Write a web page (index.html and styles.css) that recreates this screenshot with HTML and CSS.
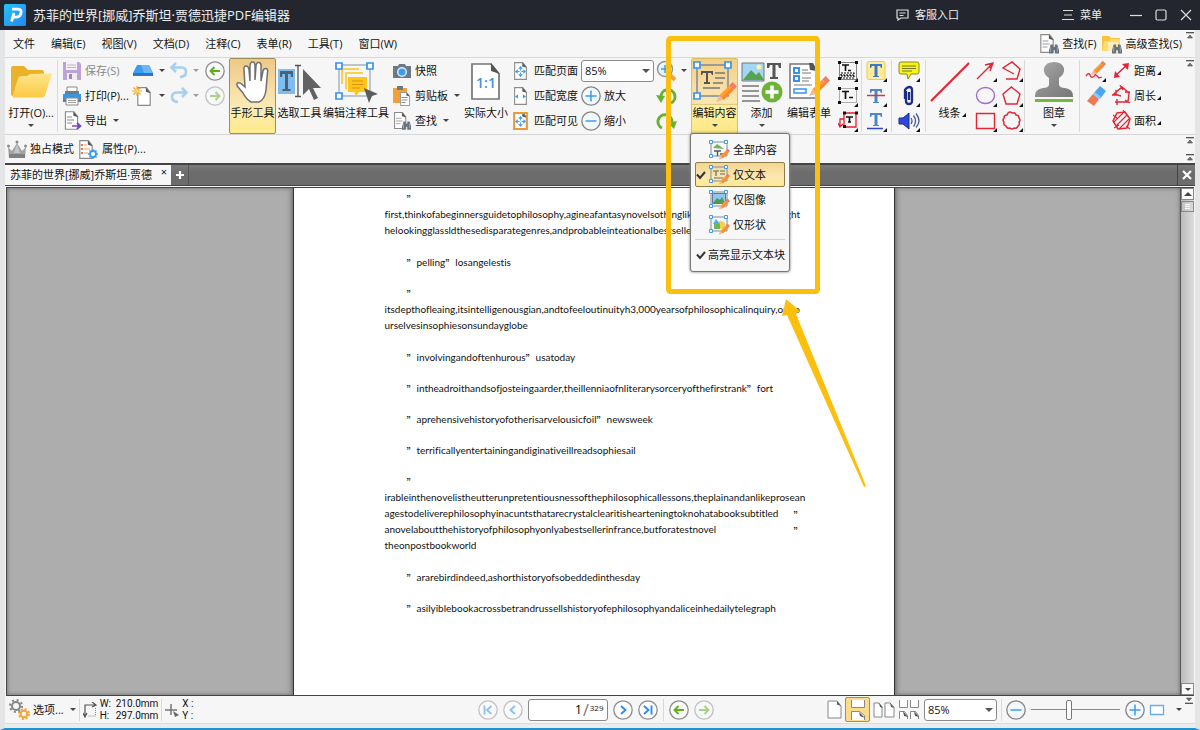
FILE: index.html
```html
<!DOCTYPE html>
<html lang="zh-CN">
<head>
<meta charset="utf-8">
<title>迅捷PDF编辑器</title>
<link rel="stylesheet" href="styles.css">
</head>
<body>
<svg class="defs" aria-hidden="true">
  <defs>
    <linearGradient id="gFolder" x1="0" y1="0" x2="0" y2="1"><stop offset="0" stop-color="#fee58a"/><stop offset="1" stop-color="#fcca42"/></linearGradient>
    <linearGradient id="gGrey" x1="0" y1="0" x2="1" y2="1"><stop offset="0" stop-color="#ababab"/><stop offset=".5" stop-color="#8d8d8d"/><stop offset="1" stop-color="#777"/></linearGradient>
    <linearGradient id="gLogo" x1="0" y1="0" x2="1" y2="1"><stop offset="0" stop-color="#27c2fb"/><stop offset="1" stop-color="#2189ef"/></linearGradient>
    <symbol id="pencil" viewBox="0 0 20 20"><path d="M1 19l3-6 4 4z" fill="#f6b795"/><path d="M4 13L13 4l4 4-9 9z" fill="#ff9f3a"/><path d="M6 15l9-9 2 2-9 9z" fill="#f98a2c"/><path d="M13 4l3-3 4 4-3 3z" fill="#f17d62"/></symbol>
    <symbol id="page" viewBox="0 0 16 20"><path d="M1.500.7h9l4 5v13.600h-13z" fill="#fff" stroke="#8a8a8a" stroke-width="1.200"/><path d="M10 .5l5 6-5-1.500z" fill="#555"/></symbol>
    <symbol id="binoc" viewBox="0 0 12 11"><path d="M2 0h3v3h2V0h3l2 7v4H7V7H5v4H0V7z" fill="#66727c"/><path d="M2 3v6M10 3v6" stroke="#a5afb7"/></symbol>
    <symbol id="frame" viewBox="0 0 22 22"><path d="M3 3h16v14H3z" fill="none" stroke="#7c8fa3" stroke-width="1"/><g fill="#fff" stroke="#3b9cf2"><path d="M1.500 1.500h3v3h-3zM16.500 1.500h3v3h-3zM1.500 15.500h3v3h-3z"/></g></symbol>
    <symbol id="prev" viewBox="0 0 20 20"><circle cx="10" cy="10" r="9.200" fill="#fafafa" stroke="#8e8e8e" stroke-width="1.300"/><path d="M15 10H6M9.500 6L5.500 10l4 4" fill="none" stroke="#5fae1d" stroke-width="1.900"/></symbol>
    <symbol id="next" viewBox="0 0 20 20"><circle cx="10" cy="10" r="9.200" fill="#fafafa" stroke="#8e8e8e" stroke-width="1.300"/><path d="M5 10h9M10.500 6l4 4-4 4" fill="none" stroke="#5fae1d" stroke-width="1.900"/></symbol>
    <symbol id="plus" viewBox="0 0 20 20"><circle cx="10" cy="10" r="9.200" fill="#f2f8fd" stroke="#858585" stroke-width="1.300"/><path d="M4.500 10h11M10 4.500v11" stroke="#3c9cf0" stroke-width="1.500"/></symbol>
    <symbol id="minus" viewBox="0 0 20 20"><circle cx="10" cy="10" r="9.200" fill="#f2f8fd" stroke="#858585" stroke-width="1.300"/><path d="M4.500 10h11" stroke="#3c9cf0" stroke-width="1.500"/></symbol>
    <symbol id="corner" viewBox="0 0 5 5"><path d="M5 1v4H1z" fill="#111"/></symbol>
    <symbol id="arrows4" viewBox="0 0 12 12"><path d="M6 0l2.500 3h-5zM6 12l2.500-3h-5zM0 6l3-2.500v5zM12 6L9 3.500v5z" fill="#3b97ec"/><path d="M6 3v2M6 7v2M3 6h2M7 6h2" stroke="#3b97ec"/></symbol>
    <symbol id="check" viewBox="0 0 10 10"><path d="M1 4.500l3 3.500 5-6" fill="none" stroke="#333" stroke-width="2"/></symbol>
    <symbol id="collapse" viewBox="0 0 8 7"><path d="M0 .7h8" stroke="#444" stroke-width="1.200"/><path d="M1.500 6L4 3l2.500 3z" fill="#777" stroke="#444" stroke-width=".6"/></symbol>
    <symbol id="find" viewBox="0 0 22 22"><use href="#page" x="1" y="1" width="16" height="19"/><path d="M4.500 8h6M4.500 11h7M4.500 14h5" stroke="#999"/><use href="#binoc" x="11" y="11" width="10" height="10"/></symbol>
  </defs>
</svg>

<div class="app">
  <header class="titlebar">
    <svg width="22" height="22" viewBox="0 0 22 22"><rect width="22" height="22" rx="1.500" fill="url(#gLogo)"/><path d="M7.500 17.500L10 9M8 5.200h5.500q4.500 0 3.500 4t-5 4H9.500" fill="none" stroke="#fff" stroke-width="2.800"/></svg>
    <h1 class="title">苏菲的世界[挪威]乔斯坦·贾德迅捷PDF编辑器</h1>
    <button class="tb-btn service"><svg width="13" height="12" viewBox="0 0 13 12"><path d="M1 1h11v8H5l-3 2V9H1zM3.500 4h6M3.500 6.500h4" fill="none" stroke="#ddd" stroke-width="1.200"/></svg>客服入口</button>
    <button class="tb-btn menu-btn"><svg width="12" height="12" viewBox="0 0 12 12"><path d="M1 1.500h10M2 6h8M0 10.500h12" stroke="#ddd" stroke-width="1.200"/></svg>菜单</button>
    <div class="win">
      <button aria-label="最小化"><svg width="12" height="12"><path d="M0 6.500h12" stroke="#ddd" stroke-width="1.200"/></svg></button>
      <button aria-label="最大化"><svg width="12" height="12"><rect x="1" y="1" width="10" height="10" rx="1.500" fill="none" stroke="#ddd" stroke-width="1.200"/></svg></button>
      <button aria-label="关闭"><svg width="12" height="12"><path d="M1 1l10 10M11 1L1 11" stroke="#ddd" stroke-width="1.200"/></svg></button>
    </div>
  </header>

  <div class="shell">
    <nav class="menubar">
      <button>文件</button><button>编辑(E)</button><button>视图(V)</button><button>文档(D)</button><button>注释(C)</button><button>表单(R)</button><button>工具(T)</button><button>窗口(W)</button>
      <div class="menubar-right">
        <button><svg width="22" height="22"><use href="#find"/></svg>查找(F)</button>
        <button><svg width="22" height="22"><path d="M1 3h7l2 2h9v13H1z" fill="#f8c33a"/><path d="M3 8h5l2-2h9v12H1z" fill="#fddc74"/><path d="M7 9h10v9H7z" fill="#fff" opacity=".5"/><use href="#binoc" x="11" y="11" width="10" height="10"/></svg>高级查找(S)</button>
      </div>
      <svg class="collapse" width="8" height="7"><use href="#collapse"/></svg>
    </nav>

    <div class="ribbon">
      <button class="big open">
        <span class="pic"><svg width="42" height="34" viewBox="0 0 42 34"><path d="M1 3q0-2 2-2h11l4 4h14q2 0 2 2v24H3q-2 0-2-2z" fill="#e9b22a"/><path d="M13 11h4l3-2 22-.500-7 22q-.500 2-3 2H4q-2 0-1.500-2l6-18q1-2 4.500-1.500z" fill="url(#gFolder)"/></svg></span>
        <span class="lbl">打开(O)...</span><i class="dd"></i>
      </button>
      <i class="vsep"></i>

      <div class="col col-file">
        <button class="dim"><svg width="20" height="20"><path d="M1 1h16l2 2v16H1z" fill="#bda2d6"/><path d="M4 1h11v8H4z" fill="#f5f0fa"/><path d="M5 4h9M5 6.500h9" stroke="#bbb"/><path d="M5 12h10v7H5z" fill="#eee"/><path d="M7 13h3v5H7z" fill="#a185bf"/></svg>保存(S)</button>
        <button><svg width="20" height="20"><path d="M5 1h10v7H5z" fill="#fff" stroke="#888"/><path d="M3 5h14v5H3z" fill="#6f7b86"/><path d="M1 8h18v7H1z" fill="#3f94e0"/><path d="M1 13h18v3H1z" fill="#6f7b86"/><path d="M4 12h12v7H4z" fill="#fff" stroke="#888"/><path d="M6 14.500h8M6 16.500h8" stroke="#999"/></svg>打印(P)...</button>
        <button><svg width="20" height="20"><use href="#page" x="2" y="0" width="15" height="19"/><path d="M5 6h5M5 9h7M5 12h5" stroke="#888"/><path d="M10 15h8M15 12l3.500 3-3.500 3" fill="none" stroke="#7847b8" stroke-width="1.700"/></svg>导出<i class="dd"></i></button>
      </div>
      <div class="col col-new">
        <button aria-label="扫描"><svg width="22" height="20"><path d="M5 4h12l4 8H1z" fill="#3d9cf0"/><path d="M9 4h8l4 8H12z" fill="#6cb6f7"/><path d="M1 12h20v3H1z" fill="#2a79c9"/></svg><i class="dd"></i></button>
        <button aria-label="新建"><svg width="22" height="20"><use href="#page" x="4" y="1" width="16" height="19"/><path d="M5 0v10M0 5h10M1.500 1.500l7 7M8.500 1.500l-7 7" stroke="#f6a623" stroke-width="1.200"/><circle cx="5" cy="5" r="2" fill="#ffd36b"/></svg><i class="dd"></i></button>
      </div>
      <div class="col col-undo">
        <button class="soft" aria-label="撤销"><svg width="20" height="20"><path d="M3 6.500h9q5 0 5 4.500t-6 5M7 2L2.500 6.500 7 11" fill="none" stroke="#58a9ef" stroke-width="2.600"/></svg><i class="dd"></i></button>
        <button class="soft" aria-label="重做"><svg width="20" height="20"><path d="M17 6.500H8q-5 0-5 4.500t6 5M13 2l4.500 4.500L13 11" fill="none" stroke="#58a9ef" stroke-width="2.600"/></svg><i class="dd"></i></button>
      </div>
      <div class="col col-nav">
        <button aria-label="后退"><svg width="20" height="20"><use href="#prev"/></svg></button>
        <button class="soft" aria-label="前进"><svg width="20" height="20"><use href="#next"/></svg></button>
      </div>

      <button class="big tool active">
        <span class="pic"><svg width="36" height="44" viewBox="0 0 36 44"><path d="M10 27L9 10q-.500-4 2-4t3 4l1 11V6q0-4 2.500-4T20 6v14l1-14q.500-4 3-3.500T26 6.500V21l2-10q.800-3 3-2.500t1.500 3.500L31 30q-1 9-7 12h-8q-5-3-8-9l-5-6q-2-3-.500-4 2-1 4 1z" fill="#fff" stroke="#707070" stroke-width="1.500"/></svg></span>
        <span class="lbl">手形工具</span>
      </button>
      <button class="big tool">
        <span class="pic"><svg width="43" height="42" viewBox="0 0 43 42"><rect y="8" width="17" height="25" fill="#7dbdf2"/><path d="M2 10h13v6h-2l-.500-3H10v15h2.500v2h-8v-2H7V13H4.500L4 16H2z" fill="#4c6173"/><path d="M17 4.500h6M17 35.500h6M20 5v30" stroke="#555" stroke-width="1.300"/><path d="M25 8v26l6-6 5 11 4-2-5-10h8z" fill="#626262"/></svg></span>
        <span class="lbl">选取工具</span>
      </button>
      <button class="big anno">
        <span class="pic"><svg width="43" height="44" viewBox="0 0 43 44"><path d="M4 5h31v31H4z" fill="none" stroke="#7f93a9"/><path d="M6 8h18v2H8v14H6zM10 12h18v2H12v15h-2z" fill="#fad04c"/><path d="M13 17h19v15h-8l-3 4-2-4h-6z" fill="#fbc51d"/><path d="M17 21h11M17 24.500h11M17 28h8" stroke="#dd9308"/><g fill="#fff" stroke="#3792ef" stroke-width="1.700"><path d="M1 3h6v6H1zM32 3h6v6h-6zM1 33h6v6H1z"/></g><path d="M29 28l14 6-6 2-3 7z" fill="#5c5c5c"/></svg></span>
        <span class="lbl">编辑注释工具</span>
      </button>

      <div class="col col-clip">
        <button><svg width="20" height="20"><path d="M1 5h5l1-2h6l1 2h5v12H1z" fill="#6d7983"/><circle cx="10" cy="11" r="5" fill="#d7ecff"/><circle cx="10" cy="11" r="3.500" fill="#3d9cf0"/></svg>快照</button>
        <button><svg width="20" height="20"><path d="M1 2h14v15H1z" fill="#f3a13a"/><path d="M5 0h6v4H5z" fill="#6d7983"/><use href="#page" x="7" y="6" width="12" height="14"/><path d="M9.500 11.500h6M9.500 14h6M9.500 16.500h4" stroke="#888"/></svg>剪贴板<i class="dd"></i></button>
        <button><svg width="20" height="20" viewBox="0 0 22 22"><use href="#find"/></svg>查找<i class="dd"></i></button>
      </div>
      <button class="big actual">
        <span class="pic"><svg width="32" height="40" viewBox="0 0 32 40"><path d="M2 2h19l8 10v25H2z" fill="#fff" stroke="#767676" stroke-width="1.700"/><path d="M21 1l9 11-9-3z" fill="#555"/><text x="16" y="26" text-anchor="middle" class="ratio">1:1</text></svg></span>
        <span class="lbl">实际大小</span>
      </button>
      <div class="col col-fit">
        <button><svg width="18" height="20"><use href="#page" x="1" y="1" width="15" height="18"/><use href="#arrows4" x="3" y="5" width="11" height="11"/></svg>匹配页面</button>
        <button><svg width="18" height="20"><use href="#page" x="1" y="1" width="15" height="18"/><path d="M3 10.500l3-2v4zM14 10.500l-3-2v4z" fill="#3b97ec"/></svg>匹配宽度</button>
        <button><svg width="18" height="20"><use href="#page" x="1" y="1" width="15" height="18"/><path d="M2 2h13v16H2z" fill="none" stroke="#ee9a34" stroke-width="1.800"/><use href="#arrows4" x="3" y="5" width="11" height="11"/></svg>匹配可见</button>
      </div>
      <div class="col col-zoom">
        <span class="sel"><select aria-label="缩放比例"><option>85%</option></select></span>
        <button><svg width="20" height="20"><use href="#plus"/></svg>放大</button>
        <button><svg width="20" height="20"><use href="#minus"/></svg>缩小</button>
      </div>
      <div class="col col-rotate">
        <button aria-label="缩放工具"><svg width="22" height="22"><path d="M13 14l6 6" stroke="#f4a045" stroke-width="4"/><circle cx="9" cy="9" r="7.500" fill="#e8f4fd" stroke="#8b98a3" stroke-width="1.500"/><path d="M5 9h8M9 5v8" stroke="#3c9cf0" stroke-width="1.500"/></svg><i class="dd"></i></button>
        <button aria-label="逆时针旋转"><svg width="22" height="20"><path d="M5 11a7 7 0 1 1 10 6" fill="none" stroke="#67b233" stroke-width="3"/><path d="M0 9l9 1-4 7z" fill="#67b233"/></svg></button>
        <button aria-label="顺时针旋转"><svg width="22" height="20"><path d="M16 11a7 7 0 1 0-10 6" fill="none" stroke="#67b233" stroke-width="3"/><path d="M21 10l-9 2 6 6z" fill="#67b233"/></svg></button>
      </div>

      <div class="drop">
        <button class="big tool split" aria-expanded="true">
          <span class="pic"><svg width="44" height="43" viewBox="0 0 44 43"><path d="M4 4h31v31H4z" fill="none" stroke="#7d8997" stroke-width="1.500"/><path d="M8 10h12v4h-1l-1-2h-3v9h2v2h-6v-2h2v-9h-3l-1 2H8z" fill="#555"/><path d="M22 12h10M22 17h10M20 22h10M10 27h17" stroke="#777" stroke-width="1.300"/><g fill="#fff" stroke="#3792ef" stroke-width="1.700"><path d="M1 1h6v6H1zM32 1h6v6h-6zM1 32h6v6H1z"/></g><use href="#pencil" x="22" y="20" width="22" height="22"/></svg></span>
          <span class="lbl">编辑内容</span><i class="dd"></i>
        </button>
        <div class="menu" role="menu">
          <button role="menuitem"><span class="ck"></span><svg width="22" height="22"><use href="#frame"/><path d="M5 9l4-4 3 2 4 3z" fill="#72b45d"/><path d="M6 12h7M9.500 12v5M12 15h5" stroke="#555" stroke-width="1.400"/><use href="#pencil" x="10" y="9" width="12" height="12"/></svg>全部内容</button>
          <button role="menuitem" class="on"><svg class="ck" width="10" height="10"><use href="#check"/></svg><svg width="22" height="22"><use href="#frame"/><path d="M5 7h6M8 7v5M12 7h5M12 10h5M6 14h9" stroke="#666" stroke-width="1.200"/><use href="#pencil" x="10" y="9" width="12" height="12"/></svg>仅文本</button>
          <button role="menuitem"><span class="ck"></span><svg width="22" height="22"><use href="#frame"/><path d="M4.500 4.500h13v10h-13z" fill="#8fc8ee" stroke="#66798a"/><path d="M5 14l4-5 3 2 2-3 3 6z" fill="#4f9a54"/><use href="#pencil" x="10" y="9" width="12" height="12"/></svg>仅图像</button>
          <button role="menuitem"><span class="ck"></span><svg width="22" height="22"><use href="#frame"/><circle cx="13" cy="11" r="4" fill="#f6cf4a"/><path d="M8 5l4 5H5z" fill="#58a9ef"/><path d="M6 10h6v5H6z" fill="#6db65a"/><use href="#pencil" x="10" y="9" width="12" height="12"/></svg>仅形状</button>
          <hr>
          <button role="menuitem"><svg class="ck" width="10" height="10"><use href="#check"/></svg>高亮显示文本块</button>
        </div>
      </div>
      <button class="big tool">
        <span class="pic"><svg width="42" height="43" viewBox="0 0 42 43"><path d="M1 2h22v18H1z" fill="#a3d5f4" stroke="#777"/><path d="M2 19l8-10 5 5 3-3 5 8z" fill="#58a352"/><circle cx="18" cy="6" r="2.500" fill="#fff2a2"/><path d="M26 2h14v5h-2l-1-3h-2.500v12H37v2h-8v-2h2.500V4H29l-1 3h-2z" fill="#555"/><path d="M1 25h17M1 30h17M1 35h17M1 40h18" stroke="#777" stroke-width="1.500"/><circle cx="31" cy="31" r="10.500" fill="#6cb338"/><path d="M24.500 31h13M31 24.500v13" stroke="#fff" stroke-width="3.500"/></svg></span>
        <span class="lbl">添加</span><i class="dd"></i>
      </button>
      <button class="big form">
        <span class="pic"><svg width="44" height="43" viewBox="0 0 44 43"><path d="M3 3h22l5 6v28H3z" fill="#fff" stroke="#767676" stroke-width="1.500"/><path d="M22 2h4l4 8-7-1z" fill="#555"/><path d="M7 7h5v5H7zM7 15h5v5H7z" fill="none" stroke="#3792ef" stroke-width="2"/><path d="M15 9h6M15 12h9M15 17h9M15 20h7M7 24h18" stroke="#777"/><path d="M7 28h12v4H7z" fill="none" stroke="#3792ef" stroke-width="1.500"/><use href="#pencil" x="21" y="14" width="22" height="22"/></svg></span>
        <span class="lbl">编辑表单</span>
      </button>

      <div class="col col-icon text-tools">
        <button aria-label="文本块"><svg width="20" height="22"><path d="M1.500 2.500h17v17h-17z" fill="none" stroke="#111" stroke-dasharray="1 1"/><path d="M4 5h7M7.500 5v6M10 10.500h3" stroke="#111" stroke-width="1.700"/><path d="M3 13h13v2H3zM3 16h13v2H3z" fill="none" stroke="#111" stroke-width="1.200" stroke-dasharray="2 1"/><path d="M0 1h3v3H0zM17 1h3v3h-3zM0 17h3v3H0z" fill="#111"/><use href="#corner" x="15" y="17" width="5" height="5"/></svg></button>
        <button aria-label="文本框"><svg width="20" height="22"><path d="M1.500 3.500h17v14h-17z" fill="none" stroke="#666" stroke-dasharray="1 1"/><path d="M4 6.500h7M7.500 6v8M11 12.500h4" stroke="#111" stroke-width="1.700"/><path d="M0 2h3v3H0zM17 2h3v3h-3zM0 16h3v3H0z" fill="#111"/><use href="#corner" x="15" y="17" width="5" height="5"/></svg></button>
        <button aria-label="标注框"><svg width="20" height="22"><path d="M6 3h12v14H6z" fill="none" stroke="#e0202c" stroke-width="1.300"/><path d="M6 9H2v7M0 13l2 4 3-3" fill="none" stroke="#e0202c" stroke-width="1.300"/><path d="M8 7h7M11.500 7v5M10 12h3" stroke="#111" stroke-width="1.600"/><path d="M5 1.500h3v3H5zM17 1.500h3v3h-3zM5 15h3v3H5z" fill="#111"/><use href="#corner" x="15" y="17" width="5" height="5"/></svg></button>
      </div>
      <i class="vsep"></i>
      <div class="col col-icon marks">
        <button aria-label="高亮"><svg width="22" height="22"><rect x="1" y="1.500" width="18" height="18" rx="2" fill="#ffeb9c" stroke="#e4cf4a"/><path d="M4 4h12v4h-1l-1-2h-2.500v10H13v1H7v-1h1.500V6H6L5 8H4z" fill="#3c78c3"/><use href="#corner" x="16" y="17" width="5" height="5"/></svg></button>
        <button aria-label="删除线"><svg width="22" height="22"><path d="M4 4h12v4h-1l-1-2h-2.500v11H13v1H7v-1h1.500V6H6L5 8H4z" fill="#4c85cb"/><path d="M1 10.500h18" stroke="#e2303a" stroke-width="1.500"/><use href="#corner" x="16" y="17" width="5" height="5"/></svg></button>
        <button aria-label="下划线"><svg width="22" height="22"><path d="M4 3h12v4h-1l-1-2h-2.500v10H13v1H7v-1h1.500V5H6L5 7H4z" fill="#4c85cb"/><path d="M1 18.500h16" stroke="#2b45d4" stroke-width="1.500"/><use href="#corner" x="16" y="17" width="5" height="5"/></svg></button>
      </div>
      <i class="vsep"></i>
      <div class="col col-icon notes">
        <button aria-label="便签"><svg width="22" height="22"><path d="M3 2h16q2 0 2 2v8q0 2-2 2h-6l-3 5-1-5H3q-2 0-2-2V4q0-2 2-2z" fill="#f7f31c" stroke="#8d8a22"/><path d="M4 6h14M4 8.500h14M4 11h10" stroke="#777a22"/><use href="#corner" x="17" y="17" width="5" height="5"/></svg></button>
        <button aria-label="附件"><svg width="22" height="22"><path d="M8 6v10q0 3 3 3t3-3V5q0-3-2.500-3T7 5v9M11 7v8" fill="none" stroke="#1d2c86" stroke-width="2.300"/><use href="#corner" x="17" y="17" width="5" height="5"/></svg></button>
        <button aria-label="声音"><svg width="22" height="22"><path d="M1 8h4l6-5v16l-6-5H1z" fill="#2d46dc" stroke="#1c2c8c"/><path d="M13 8q2 3 0 6M15.500 5.500q4 5.500 0 11M18 3.500q6 7.500 0 14" fill="none" stroke="#4a5a8c" stroke-width="1.300"/><use href="#corner" x="17" y="17" width="5" height="5"/></svg></button>
      </div>
      <i class="vsep"></i>
      <button class="big line">
        <span class="pic"><svg width="42" height="42"><path d="M2 40L40 2" stroke="#e32636" stroke-width="2.200"/></svg></span>
        <span class="lbl mark">线条</span>
      </button>
      <div class="col col-icon">
        <button aria-label="箭头"><svg width="22" height="22"><path d="M2 19L17 4M10 5l8-2-3 8M15 4v4" fill="none" stroke="#e32636" stroke-width="1.400"/><use href="#corner" x="17" y="17" width="5" height="5"/></svg></button>
        <button aria-label="椭圆"><svg width="22" height="22"><ellipse cx="10.500" cy="10.500" rx="9" ry="8" fill="none" stroke="#9b72c8" stroke-width="1.400"/><use href="#corner" x="17" y="17" width="5" height="5"/></svg></button>
        <button aria-label="矩形"><svg width="22" height="22"><path d="M1.500 3.500h18v15h-18z" fill="none" stroke="#e32636" stroke-width="1.400"/><use href="#corner" x="17" y="17" width="5" height="5"/></svg></button>
      </div>
      <div class="col col-icon">
        <button aria-label="折线"><svg width="22" height="22"><path d="M13 14L2 8l9-6 8 7-3 10H5" fill="none" stroke="#e32636" stroke-width="1.400"/><use href="#corner" x="17" y="17" width="5" height="5"/></svg></button>
        <button aria-label="多边形"><svg width="22" height="22"><path d="M10.500 2L19 9l-3 10H5L2 9z" fill="none" stroke="#e32636" stroke-width="1.400"/><use href="#corner" x="17" y="17" width="5" height="5"/></svg></button>
        <button aria-label="云朵"><svg width="22" height="22"><path d="M7 3q2-2 4 0 3-1 4 2 3 0 3 3 2 2 0 4 1 3-1 4-1 3-4 2-2 2-4 0-3 1-4-2-3-1-2-4-2-2 0-4 0-3 3-3z" fill="none" stroke="#e32636" stroke-width="1.500"/><use href="#corner" x="17" y="17" width="5" height="5"/></svg></button>
      </div>
      <i class="vsep"></i>
      <button class="big stamp">
        <span class="pic"><svg width="40" height="42" viewBox="0 0 40 42"><path d="M15 17q-6-4-5-10Q12 1 20 1t10 6q1 6-5 10v7q1 3 6 3 8 1 8 8v1H1v-1q0-7 8-8 5 0 6-3z" fill="url(#gGrey)"/><path d="M1 38h38v3H1z" fill="#76b83c"/></svg></span>
        <span class="lbl">图章</span><i class="dd"></i>
      </button>
      <i class="vsep"></i>
      <div class="col col-draw">
        <button aria-label="铅笔"><svg width="22" height="22"><use href="#pencil" x="5" y="0" width="16" height="16"/><path d="M1 16q3-4 4-1t3 2 2-2 2 1 2 2 3-1" fill="none" stroke="#e32636" stroke-width="1.300"/><use href="#corner" x="16" y="17" width="5" height="5"/></svg></button>
        <button aria-label="橡皮"><svg width="22" height="22"><path d="M9 8l6-7 6 5-6 8z" fill="#4ca3ee"/><path d="M8 9l6 5-5 7-7-5z" fill="#ee7a55"/><path d="M8 9l2-2 6 5-2 2z" fill="#8ec7f6"/></svg></button>
      </div>
      <div class="col col-measure">
        <button><svg width="21" height="22"><path d="M4 16L16 5" stroke="#e32636" stroke-width="1.500"/><path d="M11 4l7-1-1 7zM3 18l1-7 5 6z" fill="#e32636"/></svg><span class="mark">距离</span></button>
        <button><svg width="21" height="22"><path d="M10 11L3 9l8-7 7 6-1 9H4M5 5v5H1M9 0l3 5M14 7h5M6 14v6M14 15l5 3" fill="none" stroke="#e32636" stroke-width="1.400"/></svg><span class="mark">周长</span></button>
        <button><svg width="21" height="22"><path d="M6 3l8-1 5 7-3 9-9 1-5-8z" fill="none" stroke="#e32636" stroke-width="1.500"/><path d="M3 12L12 3M5 16L16 5M8 19L18 9M2 5l4 3M15 16l4 3M12 0l3 4M3 18l5-3" fill="none" stroke="#e32636" stroke-width="1.100"/></svg><span class="mark">面积</span></button>
      </div>
      <svg class="collapse" width="8" height="7"><use href="#collapse"/></svg>
    </div>

    <div class="props">
      <button><svg width="20" height="20"><path d="M1 8l4 4 5-8 5 8 4-4-1 11H2z" fill="#a3a3a3"/><path d="M2 15h16v4H2z" fill="#808080"/><path d="M7 14l3-9 3 9" fill="#c6c6c6"/><g fill="#8a8a8a"><circle cx="1.500" cy="7" r="1.500"/><circle cx="18.500" cy="7" r="1.500"/><circle cx="10" cy="3" r="1.500"/></g></svg>独占模式</button>
      <button><svg width="21" height="21"><use href="#page" x="0" y="1" width="16" height="19"/><path d="M3 6h2M3 10h2M3 14h2" stroke="#ee7a3c" stroke-width="2"/><path d="M6 6h3M6 10h6M6 14h4" stroke="#ee9b6a"/><circle cx="15" cy="15" r="3" fill="#fff" stroke="#3d9cf0" stroke-width="1.800"/><path d="M15 10v2M15 18v2M10 15h2M18 15h2M11.500 11.500l1.500 1.500M17 17l1.500 1.500M18.500 11.500L17 13M13 17l-1.500 1.500" stroke="#3d9cf0" stroke-width="1.400"/></svg>属性(P)...</button>
      <div class="collapse-pair"><svg width="8" height="7"><use href="#collapse"/></svg><svg width="8" height="7"><use href="#collapse"/></svg></div>
    </div>

    <div class="tabs">
      <div class="tab"><span>苏菲的世界[挪威]乔斯坦·贾德</span><button aria-label="关闭标签">×</button></div>
      <button class="newtab" aria-label="新建标签"><svg width="10" height="10"><path d="M1 5h8M5 1v8" stroke="#fff" stroke-width="2.200"/></svg></button>
      <button class="closeall" aria-label="关闭全部"><svg width="10" height="10"><path d="M1 1l8 8M9 1L1 9" stroke="#fff" stroke-width="2.200"/></svg></button>
    </div>

    <main class="view">
      <div class="canvas">
        <article class="page">
          <p class="lead"><q>”</q></p>
          <p>first,thinkofabeginnersguidetophilosophy,agineafantasynovelsothinglikeabriefhistorytothrought<br>helookingglassldthesedisparategenres,andprobableinteationalbestseller</p>
          <p class="in"><q>”</q>pelling<q>”</q>losangelestis</p>
          <p class="in"><q>”</q></p>
          <p>itsdepthofleaing,itsintelligenousgian,andtofeeloutinuityh3,000yearsofphilosophicalinquiry,opeo<br>urselvesinsophiesonsundayglobe</p>
          <p class="in"><q>”</q>involvingandoftenhurous<q>”</q>usatoday</p>
          <p class="in"><q>”</q>intheadroithandsofjosteingaarder,theillenniaofnliterarysorceryofthefirstrank<q>”</q>fort</p>
          <p class="in"><q>”</q>aprehensivehistoryofotherisarvelousicfoil<q>”</q>newsweek</p>
          <p class="in"><q>”</q>terrificallyentertainingandiginativeillreadsophiesail</p>
          <p class="in"><q>”</q></p>
          <p>irableinthenovelistheutterunpretentiousnessofthephilosophicallessons,theplainandanlikeprosean</p>
          <p class="spread"><span>agestodeliverephilosophyinacuntsthatarecrystalclearitishearteningtoknohatabooksubtitled</span><q>”</q></p>
          <p class="spread"><span>anovelaboutthehistoryofphilosophyonlyabestsellerinfrance,butforatestnovel</span><q>”</q></p>
          <p>theonpostbookworld</p>
          <p class="in"><q>”</q>ararebirdindeed,ashorthistoryofsobeddedinthesday</p>
          <p class="in"><q>”</q>asilyiblebookacrossbetrandrussellshistoryofephilosophyandaliceinhedailytelegraph</p>
        </article>
      </div>
      <div class="scroll">
        <button aria-label="向上"><i class="dd up"></i></button>
        <span class="thumb"></span>
        <button class="down" aria-label="向下"><i class="dd"></i></button>
      </div>
    </main>

    <footer class="status">
      <div class="st-left">
        <button class="opts"><svg width="21" height="21"><g fill="none"><circle cx="7" cy="7" r="4" stroke="#858585" stroke-width="2"/><circle cx="7" cy="7" r="6" stroke="#858585" stroke-width="2" stroke-dasharray="2 2.700"/><circle cx="15" cy="15" r="3.300" stroke="#f2a637" stroke-width="2"/><circle cx="15" cy="15" r="5" stroke="#f2a637" stroke-width="2" stroke-dasharray="2 1.930"/></g></svg>选项...<i class="dd"></i></button>
        <i class="vsep"></i>
        <svg width="14" height="16"><path d="M2 14V3h10M9 0l4 3-4 2M0 11l2 4 2-4" fill="none" stroke="#555" stroke-width="1.200"/><path d="M12.500 6v8H5" fill="none" stroke="#888" stroke-dasharray="1 1"/></svg>
        <dl class="dims"><dt>W:</dt><dd>210.0mm</dd><dt>H:</dt><dd>297.0mm</dd></dl>
        <i class="vsep"></i>
        <svg width="14" height="16"><path d="M0 8h12M6 2v11" stroke="#777" stroke-width="1.500"/><path d="M8 9l6 4-4 2z" fill="#666"/></svg>
        <div class="xy"><span>X :</span><span>Y :</span></div>
      </div>
      <div class="st-mid">
        <button class="soft" aria-label="首页"><svg width="20" height="20"><circle cx="10" cy="10" r="9.200" fill="#fff" stroke="#8e8e8e" stroke-width="1.300"/><path d="M6.500 5.500v9M13.500 6L9 10l4.500 4" fill="none" stroke="#2b8df0" stroke-width="1.900"/></svg></button>
        <button class="soft" aria-label="上一页"><svg width="20" height="20"><circle cx="10" cy="10" r="9.200" fill="#fff" stroke="#8e8e8e" stroke-width="1.300"/><path d="M12 6l-4.500 4 4.500 4" fill="none" stroke="#2b8df0" stroke-width="1.900"/></svg></button>
        <label class="pageno"><input aria-label="页码" value="1"><b>/</b><small>329</small></label>
        <button aria-label="下一页"><svg width="20" height="20"><circle cx="10" cy="10" r="9.200" fill="#fff" stroke="#8e8e8e" stroke-width="1.300"/><path d="M8 6l4.500 4L8 14" fill="none" stroke="#2b8df0" stroke-width="1.900"/></svg></button>
        <button aria-label="末页"><svg width="20" height="20"><circle cx="10" cy="10" r="9.200" fill="#fff" stroke="#8e8e8e" stroke-width="1.300"/><path d="M6 6l4.500 4L6 14M13.500 5.500v9" fill="none" stroke="#2b8df0" stroke-width="1.900"/></svg></button>
        <i class="vsep"></i>
        <button aria-label="后退视图"><svg width="20" height="20"><use href="#prev"/></svg></button>
        <button class="soft" aria-label="前进视图"><svg width="20" height="20"><use href="#next"/></svg></button>
      </div>
      <div class="st-right">
        <div class="modes">
          <button aria-label="单页"><svg width="15" height="19"><path d="M1 1h9l4 5v12H1z" fill="#fff" stroke="#888"/><path d="M10 1l4 5-4-1.500z" fill="#555"/></svg></button>
          <button class="sel-mode" aria-label="连续"><svg width="16" height="20"><path d="M1.500 0v7.500h13V0M1.500 20v-8.500h8l5 4v4.500" fill="#fff" stroke="#888"/><path d="M9 12l6 6-5-2z" fill="#555"/></svg></button>
          <button aria-label="双页"><svg width="22" height="16"><path d="M1 1h5l3 4v10H1zM12 1h5l4 4v10h-9z" fill="#fff" stroke="#888"/><path d="M6 1l4 5-3-1zM17 1l4 5-3-1z" fill="#555"/></svg></button>
          <button aria-label="双页连续"><svg width="22" height="20"><path d="M1.500 0v7.500h8V0M12.500 0v7.500h8V0M1.500 19v-7.500h5l3 4v3.500M12.500 19v-7.500h5l3 4v3.500" fill="#fff" stroke="#888"/><path d="M5 11l5 6-4-1zM16 11l5 6-4-1z" fill="#555"/></svg></button>
        </div>
        <span class="sel"><select aria-label="缩放"><option>85%</option></select></span>
        <i class="vsep"></i>
        <button aria-label="缩小视图"><svg width="20" height="20"><use href="#minus"/></svg></button>
        <input class="slider" type="range" min="0" max="100" value="42" aria-label="缩放滑块">
        <button aria-label="放大视图"><svg width="20" height="20"><use href="#plus"/></svg></button>
        <button class="full" aria-label="全屏"><svg width="16" height="12"><path d="M1.500 1.500h13v9h-13z" fill="#fff" stroke="#6aaee8" stroke-width="1.300"/></svg><i class="dd"></i></button>
      </div>
      <svg class="collapse" width="8" height="7"><use href="#collapse"/></svg>
    </footer>
  </div>

  <svg class="callout" width="210" height="460" viewBox="0 0 210 460" aria-hidden="true"><rect x="7.500" y="8.500" width="149" height="253" rx="2" fill="none" stroke="#fdbf0d" stroke-width="5"/><path d="M125 269l14 12-4 3 70 172-2 1-77-172-5 1z" fill="#fdbf0d"/></svg>
</div>
</body>
</html>
```

FILE: styles.css
```css
* { box-sizing: border-box; }
html, body { height: 100%; }
body {
  margin: 0;
  font: 11px/16px "Open Sans", "Noto Sans CJK SC", sans-serif;
  color: #111;
}
svg { display: block; flex: none; }
.defs { position: absolute; width: 0; height: 0; }
button {
  margin: 0; padding: 0; border: 0; background: none;
  font: inherit; color: inherit; white-space: nowrap;
  display: flex; align-items: center;
}
.app { position: relative; height: 100vh; min-height: 500px; display: flex; flex-direction: column; overflow: hidden; }

.titlebar { flex: none; height: 30px; padding: 0 8px 0 4px; display: flex; align-items: center; background: #23262e; color: #eee; }
.title { margin: 0 auto 0 7px; font-size: 13px; font-weight: 400; line-height: 20px; white-space: nowrap; }
.tb-btn { gap: 6px; }
.service { margin-right: 103px; }
.menu-btn { margin-right: 28px; }
.win { display: flex; gap: 13px; }

.shell {
  flex: 1; min-height: 0; display: flex; flex-direction: column;
  padding-bottom: 4px;
  border: solid #e4e5e6; border-width: 0 5px 0 5px;
  border-bottom: 2px solid #1d94cf;
  background: #f6f6f6;
  box-shadow: inset 0 -4px #ececec;
}
.collapse { align-self: flex-start; margin-left: auto; }

.menubar { flex: none; height: 28px; padding: 0 1px 0 8px; display: flex; align-items: center; gap: 16px; border-bottom: 1px solid #d6d9d6; }
.menubar-right { margin-left: auto; display: flex; gap: 5px; }
.menubar-right button { gap: 2px; }
.menubar .collapse { margin: 2px 0 0 -12px; }

.ribbon { flex: none; height: 77px; padding-right: 1px; display: flex; border-bottom: 1px solid #d6d6d6; }
.ribbon .collapse { margin-top: 2px; }
.vsep { flex: none; width: 1px; margin: 2px 0; background: #d9d9d9; }
.dd { flex: none; width: 0; height: 0; border: 3px solid transparent; border-top-color: #444; border-bottom: 0; }
.dd.up { border: 4px solid transparent; border-bottom-color: #444; border-top: 0; }
.soft { opacity: .5; }
.dim { color: #888; }

.big { flex: none; height: 76px; flex-direction: column; border: 1px solid transparent; border-radius: 2px; }
.big .pic { height: 46px; display: flex; align-items: center; justify-content: center; }
.tool { width: 47px; }
.open { width: 52px; }
.anno { width: 66px; }
.actual { width: 48px; margin-left: 2px; }
.form { width: 48px; }
.line { width: 44px; margin-left: 2px; }
.line .lbl { padding-left: 4px; }
.stamp { width: 54px; padding-left: 4px; }
.big .dd { margin-top: 3px; }
.active { border-color: #a08d55; background: linear-gradient(#eec987, #fbeab5 65%, #ffea8a); }
.split { border-color: #d9c068; background: linear-gradient(#f3cf85, #fae7b4 60%, #dcbf6c 61%, #fff0a6 63%, #fde780); }
.ratio { font: 600 14px "Open Sans", sans-serif; fill: #3f92de; }
.mark::after { content: ""; display: inline-block; margin-left: 1px; border: 2px solid #111; border-top-color: transparent; border-left-color: transparent; }

.col { flex: none; display: grid; grid-template-rows: repeat(3, 25px); align-items: center; }
.col button { gap: 3px; height: 25px; }
.col-file { width: 70px; margin-left: 4px; }
.col-file .dd, .col-clip .dd { margin-left: 3px; }
.col-new { width: 37px; }
.col-new button { gap: 5px; }
.col-undo { width: 36px; }
.col-undo button { gap: 4px; }
.col-nav { width: 24px; }
.col-clip { width: 68px; margin-left: 3px; }
.col-fit { width: 69px; margin-left: 2px; }
.col-fit button { gap: 4px; }
.col-zoom { width: 75px; }
.col-rotate { width: 35px; }
.col-icon { width: 25px; margin-left: 1px; justify-content: center; }
.text-tools { width: 27px; }
.marks { width: 28px; }
.notes { width: 32px; }
.col-draw { width: 31px; justify-content: center; }
.col-measure { width: 52px; }
.col-measure button { gap: 2px; }

.sel { position: relative; display: block; width: 73px; height: 22px; }
.sel select { width: 100%; height: 100%; padding: 0 3px; appearance: none; border: 1px solid #8b8b8b; border-radius: 3px; background: #fff; font: inherit; color: inherit; }
.sel::after { content: ""; position: absolute; right: 4px; top: 9px; border: 4px solid transparent; border-top-color: #555; border-bottom: 0; pointer-events: none; }

.drop { position: relative; flex: none; }
.menu { position: absolute; z-index: 2; top: 75px; left: -1px; padding: 3px 4px 4px; border: 1px solid #777; border-radius: 3px; background: #f7f7f7; box-shadow: 0 0 3px #777; }
.menu button { width: 90px; height: 25px; gap: 2px; border: 1px solid transparent; border-radius: 2px; }
.menu .ck { width: 10px; }
.menu svg + svg, .menu span + svg { margin-right: 1px; }
.menu .on { border-color: #8e7c4b; background: linear-gradient(#f4d592, #fbe7b2 60%, #ffe98e); }
.menu hr { height: 1px; margin: 2px 0; border: 0; background: #d2d2d2; }

.props { flex: none; height: 28px; padding: 0 1px 0 2px; display: flex; align-items: center; gap: 4px; }
.props button { gap: 3px; }
.collapse-pair { margin-left: auto; align-self: stretch; display: flex; flex-direction: column; justify-content: space-between; padding: 2px 0; }

.tabs { flex: none; height: 23px; display: flex; border-top: 2px solid #444; border-bottom: 1px solid #444; background: linear-gradient(#7a7a7a, #6c6c6c 40%, #6c6c6c); }
.tab { width: 166px; padding: 0 4px 0 5px; display: flex; align-items: center; justify-content: space-between; background: #f6f6f6; white-space: nowrap; }
.tab button { align-self: flex-start; line-height: 14px; }
.newtab { width: 18px; justify-content: center; border-right: 1px solid #555; }
.closeall { width: 18px; margin-left: auto; justify-content: center; border-left: 1px solid #444; }

.view { flex: 1; min-height: 0; margin: 1px 1px 0; display: flex; border: solid #444; border-width: 1px 0 1px 1px; }
.canvas { flex: 1; display: flex; justify-content: center; overflow: hidden; background: #adadad; box-shadow: inset 0 0 4px #666; }
.page {
  width: 602px; padding: 2px 90px 0 91px; border: solid #333; border-width: 0 1px;
  background: #fff; box-shadow: 0 0 6px #444;
  font: 10px/16px Lato, "Noto Sans CJK SC", sans-serif;
  font-variant-ligatures: none;
}
.page p { margin: 0; white-space: nowrap; }
.page .lead, .page .in { text-indent: 22px; }
.page .in { margin-top: 16px; }
.page .in + .in { margin-top: 15px; }
.page q { quotes: none; font-family: "Noto Sans CJK SC", sans-serif; line-height: 1; vertical-align: -2px; }
.page .spread { display: flex; justify-content: space-between; align-items: flex-end; }

.scroll { flex: none; width: 14px; display: flex; flex-direction: column; gap: 1px; border-left: 1px solid #555; background: linear-gradient(90deg, #bbb, #ddd); }
.scroll button { height: 12px; justify-content: center; border: 1px solid #888; background: #f9f9f9; }
.thumb { height: 11px; border: 1px solid #888; background: repeating-linear-gradient(#fff 0 1px, #ccc 1px 2px) content-box #fff; padding: 2px 3px; }
.scroll .down { margin-top: auto; }

.status { position: relative; flex: none; height: 28px; padding: 0 13px 0 4px; display: grid; grid-template-columns: 1fr auto 1fr; align-items: center; border-bottom: 1px solid #d5dde2; }
.status .vsep { height: 22px; margin: 0; }
.status .collapse { position: absolute; right: 2px; top: 1px; transform: rotate(180deg); }
.st-left, .st-mid, .st-right, .modes { display: flex; align-items: center; }
.st-left { gap: 3px; }
.opts { gap: 3px; }
.opts .dd { margin: 0 0 0 3px; }
.dims { margin: 0; display: grid; grid-template-columns: 16px auto; font: 10px/12px Roboto, sans-serif; }
.dims dd { margin: 0; }
.xy { display: flex; flex-direction: column; font: 10px/12px Roboto, sans-serif; }
.st-mid { gap: 5px; }
.pageno { width: 80px; height: 22px; padding-right: 3px; display: flex; align-items: center; border: 1px solid #888; border-radius: 3px; background: #fff; }
.pageno input { flex: 1; min-width: 0; padding: 0; border: 0; outline: 0; background: none; text-align: right; font: 12px "Open Sans", sans-serif; }
.pageno b { padding: 0 1px; font-size: 16px; font-weight: 400; color: #777; }
.pageno small { align-self: flex-start; font-size: 8px; line-height: 16px; }
.st-right { justify-content: flex-end; gap: 4px; }
.modes { gap: 3px; }
.sel-mode { width: 25px; height: 25px; justify-content: center; border: 1px solid #a38f52; border-radius: 2px; background: #f9dc8c; }
.slider { appearance: none; width: 89px; height: 20px; margin: 0 1px; background: linear-gradient(#888, #888) center / 100% 1px no-repeat; }
.slider::-webkit-slider-thumb { appearance: none; width: 6px; height: 20px; border: 1px solid #777; border-radius: 2px; background: #fff; }
.full { gap: 11px; }

.callout { position: absolute; left: 661px; top: 30px; pointer-events: none; z-index: 3; }
```
